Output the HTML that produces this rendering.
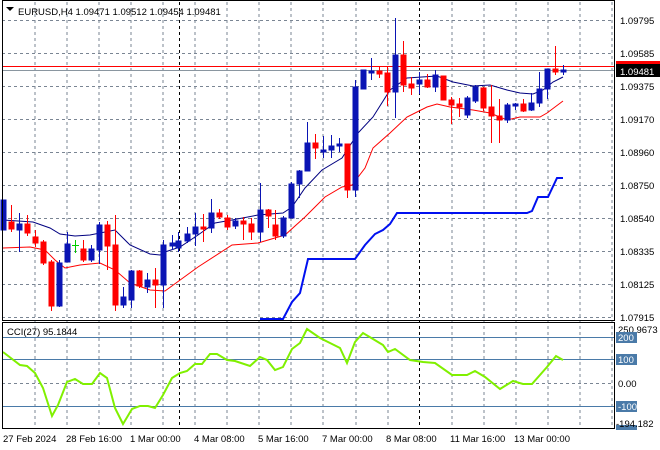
<!DOCTYPE html>
<html><head><style>
body{margin:0;background:#fff;width:660px;height:450px;overflow:hidden}
svg{display:block;font-family:"Liberation Sans",sans-serif;font-size:9.5px}
</style></head><body>
<svg width="660" height="450" viewBox="0 0 660 450" xmlns="http://www.w3.org/2000/svg">
<rect width="660" height="450" fill="#fff"/>
<g stroke="#7a8593" stroke-dasharray="3,3" stroke-width="1">
<path d="M35 2V428M67 2V428M99 2V428M131 2V428M163 2V428M195 2V428M227 2V428M259 2V428M291 2V428M323 2V428M356 2V428M388 2V428M452 2V428M484 2V428M516 2V428M548 2V428M580 2V428M612 2V428"/>
<path d="M2 20.5H614M2 53.5H614M2 86.5H614M2 119.5H614M2 152.5H614M2 185.5H614M2 218.5H614M2 251.5H614M2 284.5H614M2 317.5H614M2 383.5H614"/>
</g>
<g stroke="#000" stroke-dasharray="3,3"><path d="M179.5 2V428M419.5 2V428"/></g>
<g stroke="#4a7aa8"><path d="M2 337.5H614M2 359.5H614M2 406.5H614"/></g>
<line x1="2" y1="66.5" x2="614" y2="66.5" stroke="#f00"/>
<line x1="2" y1="70.5" x2="614" y2="70.5" stroke="#8a96a0"/>
<g fill="none" stroke-width="1">
<polyline stroke="#000080" points="3,220 33,222 50,228 60,234 75,236 90,235 100,233 115,230 130,245 150,254 160,255 165,252 180,247 198,235 215,223 232,220 258,215 283,213 292,207 305,188 322,170 342,158 358,133 373,117 390,90 407,78 437,76 453,82 473,86 490,85 507,90 520,93 533,94 543,90 553,82 563,77"/>
<polyline stroke="#f00" points="3,248 30,247 45,250 55,260 65,268 80,265 100,263 115,270 130,283 150,290 165,291 198,267 232,245 258,243 285,235 305,217 325,197 342,187 352,185 365,168 373,148 390,133 407,117 427,107 437,104 450,107 473,110 490,113 507,120 520,117 540,117 547,113 563,101"/>
<polyline stroke="#0010f0" stroke-width="2" points="260,319 283,319 292,302 300,293 308,259 355,259 365,245 375,234 383,230 390,224 397,213 527,213 532,211 538,197 548,197 557,178 563,178"/>
<polyline stroke="#80f000" stroke-width="2" points="3,352 20,365 27,366 35,373 43,388 52,416 58,405 67,382 75,379 83,384 92,384 100,373 107,378 115,408 123,424 132,409 140,406 148,406 155,408 163,395 172,378 180,373 187,371 195,364 202,364 210,354 217,354 227,360 235,361 250,366 260,357 267,360 275,370 283,367 292,349 300,343 307,329 320,338 330,343 340,348 347,363 355,342 363,333 373,339 383,345 388,352 395,349 410,360 423,362 435,363 452,375 467,375 475,371 485,377 500,389 513,381 523,384 532,384 547,367 556,356 563,360"/>
</g>
<g stroke="#0a14b4" fill="#0a14b4">
<path d="M3.5 200V230M19.5 213V252M59.5 260V307M67.5 232V262M91.5 245V262M99.5 222V264M123.5 287V308M131.5 270V308M147.5 273V293M163.5 240V308M172.5 235V250M178.5 232V252M187.5 227V243M195.5 213V246M211.5 199V233M235.5 218V229M260.5 183V242M283.5 216V238M291.5 182V218M299.5 170V198M307.5 122V171M323.5 136V158M331.5 135V158M339.5 138V152M355.5 80V197M363.5 70V89M371.5 58V80M395.5 18V118M419.5 72V94M435.5 70V92M467.5 96V118M475.5 85V103M507.5 103V123M515.5 103V110M531.5 93V111M539.5 72V107M547.5 69V99M563.5 65V75"/>
<rect x="1" y="200" width="5" height="30"/><rect x="17" y="224" width="5" height="6"/><rect x="57" y="263" width="5" height="43"/><rect x="65" y="244" width="5" height="18"/><rect x="89" y="249" width="5" height="11"/><rect x="97" y="225" width="5" height="25"/><rect x="121" y="297" width="5" height="8"/><rect x="129" y="271" width="5" height="29"/><rect x="145" y="280" width="5" height="7"/><rect x="161" y="245" width="5" height="40"/><rect x="170" y="243" width="5" height="3"/><rect x="176" y="241" width="5" height="7"/><rect x="185" y="234" width="5" height="7"/><rect x="193" y="227" width="5" height="7"/><rect x="209" y="213" width="5" height="15"/><rect x="233" y="221" width="5" height="5"/><rect x="258" y="210" width="5" height="22"/><rect x="281" y="218" width="5" height="18"/><rect x="289" y="184" width="5" height="34"/><rect x="297" y="171" width="5" height="13"/><rect x="305" y="143" width="5" height="28"/><rect x="321" y="150" width="5" height="2"/><rect x="329" y="146" width="5" height="4"/><rect x="337" y="144" width="5" height="2"/><rect x="353" y="87" width="5" height="103"/><rect x="361" y="70" width="5" height="19"/><rect x="369" y="71" width="5" height="2"/><rect x="393" y="55" width="5" height="37"/><rect x="417" y="80" width="5" height="4"/><rect x="433" y="75" width="5" height="12"/><rect x="465" y="98" width="5" height="17"/><rect x="473" y="87" width="5" height="14"/><rect x="505" y="105" width="5" height="15"/><rect x="513" y="104" width="5" height="2"/><rect x="529" y="103" width="5" height="7"/><rect x="537" y="89" width="5" height="14"/><rect x="545" y="69" width="5" height="20"/><rect x="561" y="70" width="5" height="2"/>
</g>
<g stroke="#f00" fill="#f00">
<path d="M11.5 205V232M27.5 215V236M35.5 230V247M43.5 240V265M51.5 260V311M83.5 240V262M107.5 221V270M115.5 215V311M139.5 270V288M155.5 268V308M203.5 214V242M219.5 209V219M227.5 215V230M243.5 217V240M251.5 218V240M268.5 209V228M275.5 210V240M315.5 134V159M347.5 144V198M379.5 67V78M387.5 67V106M403.5 41V92M411.5 77V95M427.5 74V88M443.5 76V100M451.5 97V124M459.5 98V117M483.5 87V111M491.5 85V143M499.5 99V143M523.5 99V112M555.5 46V75"/>
<rect x="9" y="222" width="5" height="7"/><rect x="25" y="224" width="5" height="9"/><rect x="33" y="237" width="5" height="6"/><rect x="41" y="242" width="5" height="21"/><rect x="49" y="262" width="5" height="44"/><rect x="81" y="249" width="5" height="11"/><rect x="105" y="225" width="5" height="21"/><rect x="113" y="245" width="5" height="60"/><rect x="137" y="271" width="5" height="15"/><rect x="153" y="280" width="5" height="5"/><rect x="201" y="227" width="5" height="2"/><rect x="217" y="213" width="5" height="4"/><rect x="225" y="218" width="5" height="9"/><rect x="241" y="221" width="5" height="3"/><rect x="249" y="224" width="5" height="8"/><rect x="266" y="210" width="5" height="6"/><rect x="273" y="225" width="5" height="11"/><rect x="313" y="143" width="5" height="5"/><rect x="345" y="144" width="5" height="46"/><rect x="377" y="71" width="5" height="3"/><rect x="385" y="73" width="5" height="19"/><rect x="401" y="55" width="5" height="30"/><rect x="409" y="84" width="5" height="4"/><rect x="425" y="80" width="5" height="7"/><rect x="441" y="76" width="5" height="24"/><rect x="449" y="100" width="5" height="5"/><rect x="457" y="104" width="5" height="3"/><rect x="481" y="88" width="5" height="20"/><rect x="489" y="107" width="5" height="9"/><rect x="497" y="116" width="5" height="4"/><rect x="521" y="104" width="5" height="7"/><rect x="553" y="69" width="5" height="3"/>
</g>
<path d="M75.5 240V253M72 245.5H79" stroke="#0c0"/>
<g stroke="#000" fill="none"><rect x="2.5" y="0.5" width="612" height="320"/><rect x="2.5" y="322.5" width="612" height="106"/></g>
<path d="M6 7h8l-4 4z" fill="#000"/>
<text x="18" y="15" fill="#000">EURUSD,H4  1.09471 1.09512 1.09454 1.09481</text>
<text x="7" y="335" fill="#000">CCI(27) 95.1844</text>
<g fill="#000">
<text x="620" y="24">1.09795</text><text x="620" y="57">1.09585</text><text x="620" y="90">1.09375</text><text x="620" y="123">1.09170</text><text x="620" y="156">1.08960</text><text x="620" y="189">1.08750</text><text x="620" y="222">1.08540</text><text x="620" y="255">1.08335</text><text x="620" y="288">1.08125</text><text x="620" y="321">1.07915</text>
</g>
<rect x="616" y="61" width="44" height="8" fill="#f00"/>
<rect x="616" y="64" width="44" height="13" fill="#000"/>
<text x="620" y="75" fill="#fff">1.09481</text>
<text x="618" y="333" fill="#000">250.9673</text>
<rect x="616" y="332" width="21" height="11" fill="#4a7aa8"/><text x="618" y="341" fill="#fff">200</text>
<rect x="616" y="354" width="21" height="11" fill="#4a7aa8"/><text x="618" y="363" fill="#fff">100</text>
<text x="618" y="387" fill="#000">0.00</text>
<rect x="616" y="401" width="21" height="11" fill="#4a7aa8"/><text x="618" y="410" fill="#fff">-100</text>
<rect x="616" y="425" width="21" height="5" fill="#4a7aa8"/>
<text x="616" y="427" fill="#000">-194.182</text>
<g fill="#000">
<text x="3" y="442">27 Feb 2024</text><text x="66" y="442">28 Feb 16:00</text><text x="130" y="442">1 Mar 00:00</text><text x="194" y="442">4 Mar 08:00</text><text x="258" y="442">5 Mar 16:00</text><text x="322" y="442">7 Mar 00:00</text><text x="386" y="442">8 Mar 08:00</text><text x="450" y="442">11 Mar 16:00</text><text x="514" y="442">13 Mar 00:00</text>
</g>
</svg>
</body></html>
